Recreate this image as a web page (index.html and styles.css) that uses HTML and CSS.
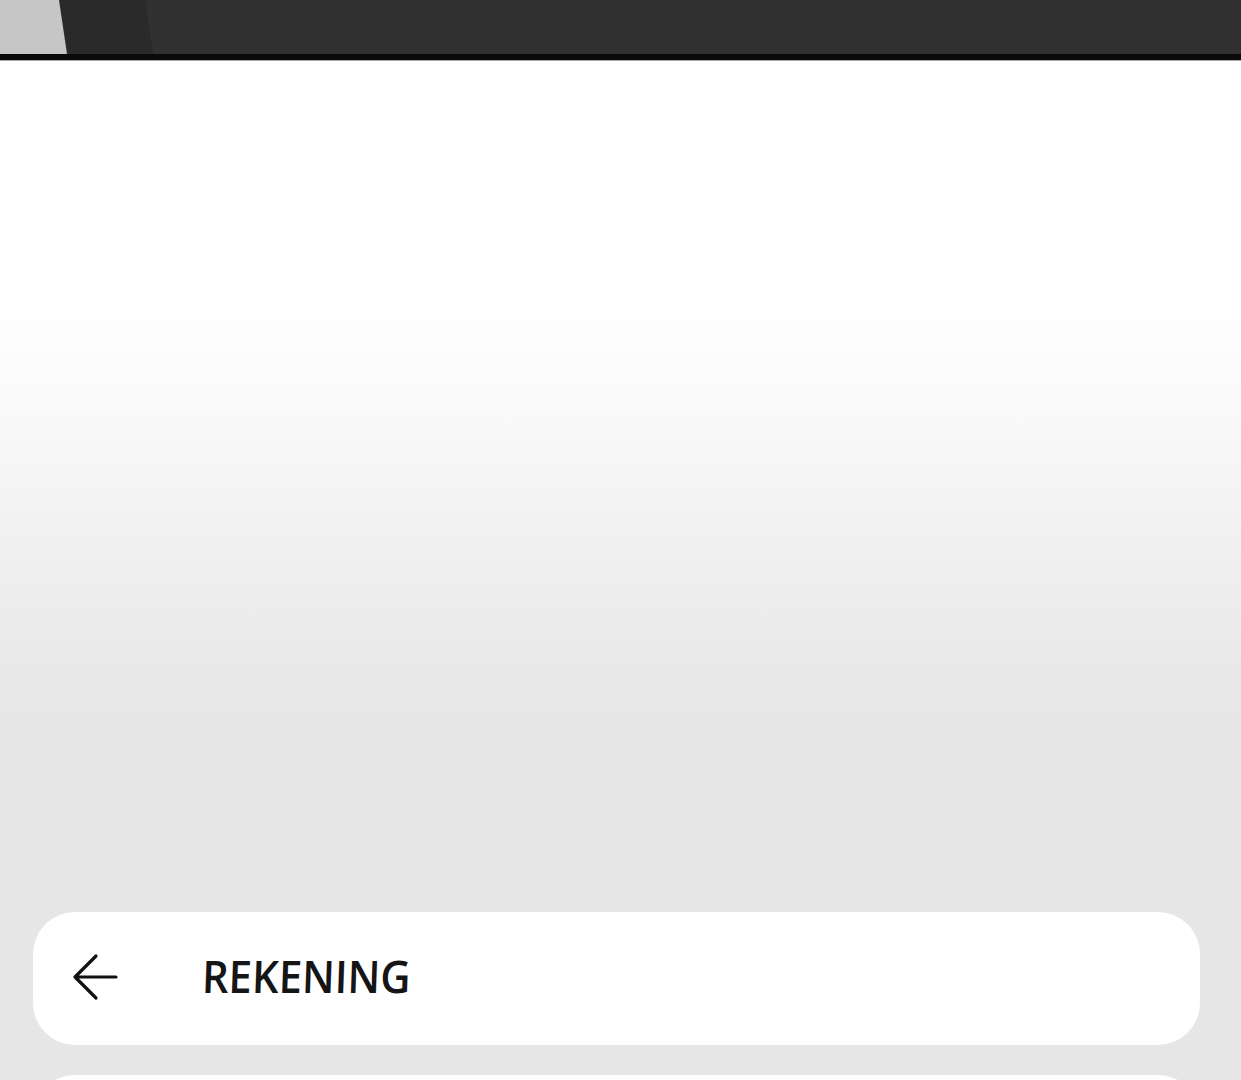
FILE: index.html
```html
<!DOCTYPE html>
<html lang="en">
<head>
    <meta charset="UTF-8">
    <link rel="stylesheet" href="styles.css">
</head>
<body>
    <div class="top-strip">
        <div class="strip-light"></div>
        <div class="strip-mid"></div>
        <div class="strip-dark"></div>
    </div>

    <div class="page">
        <div class="menu">
            <div class="menu-item">
                <svg class="back-icon" width="48" height="48" viewBox="0 0 48 48">
                    <path d="M45 24 H4 M25 3 L4 24 L25 45" fill="none" stroke="#111" stroke-width="3.2" stroke-linecap="round" stroke-linejoin="round"/>
                </svg>
                <span class="menu-label">REKENING</span>
            </div>
            <div class="menu-item"></div>
        </div>
    </div>
</body>
</html>
```

FILE: styles.css
```css
body {
    margin: 0;
    font-family: 'Open Sans', 'Liberation Sans', sans-serif;
    background-color: #e6e6e6;
    overflow: hidden;
}

.top-strip {
    position: relative;
    height: 54px;
    background-color: #313131;
    border-bottom: 6px solid #0a0a0a;
    box-shadow: 0 1px 0 #a8a8a8;
}

/* slanted panels of the comic frame above */
.strip-light,
.strip-mid,
.strip-dark {
    position: absolute;
    top: 0;
    left: 0;
    height: 54px;
}

.strip-dark {
    width: 156px;
    background-color: #2a2a2a;
    clip-path: polygon(0 0, 145px 0, 153px 100%, 0 100%);
    border-right: 2px solid #111;
}

.strip-mid {
    width: 100px;
    background-color: #363636;
}

.strip-light {
    width: 68px;
    background-color: #c6c6c6;
    clip-path: polygon(0 0, 59px 0, 67px 100%, 0 100%);
    z-index: 2;
}

.page {
    height: 1019px;
    margin-top: 1px;
    background: linear-gradient(to bottom, #ffffff 0px, #ffffff 240px, #f9f9f9 360px, #efefef 500px, #e8e8e8 620px, #e6e6e6 700px);
    display: flex;
    flex-direction: column;
    justify-content: flex-end;
}

.menu {
    display: flex;
    flex-direction: column;
    gap: 30px;
    padding: 0 41px 0 33px;
    margin-bottom: -128px;
}

.menu-item {
    height: 133px;
    background-color: #fff;
    border-radius: 42px;
    display: flex;
    align-items: center;
    padding-left: 38px;
}

.back-icon {
    flex-shrink: 0;
    margin-top: -4px;
}

.menu-label {
    margin-left: 83px;
    font-size: 45px;
    font-weight: 600;
    color: #151515;
    transform: skewX(-2deg) scaleX(0.93);
    transform-origin: left center;
    margin-top: -6px;
}
```
